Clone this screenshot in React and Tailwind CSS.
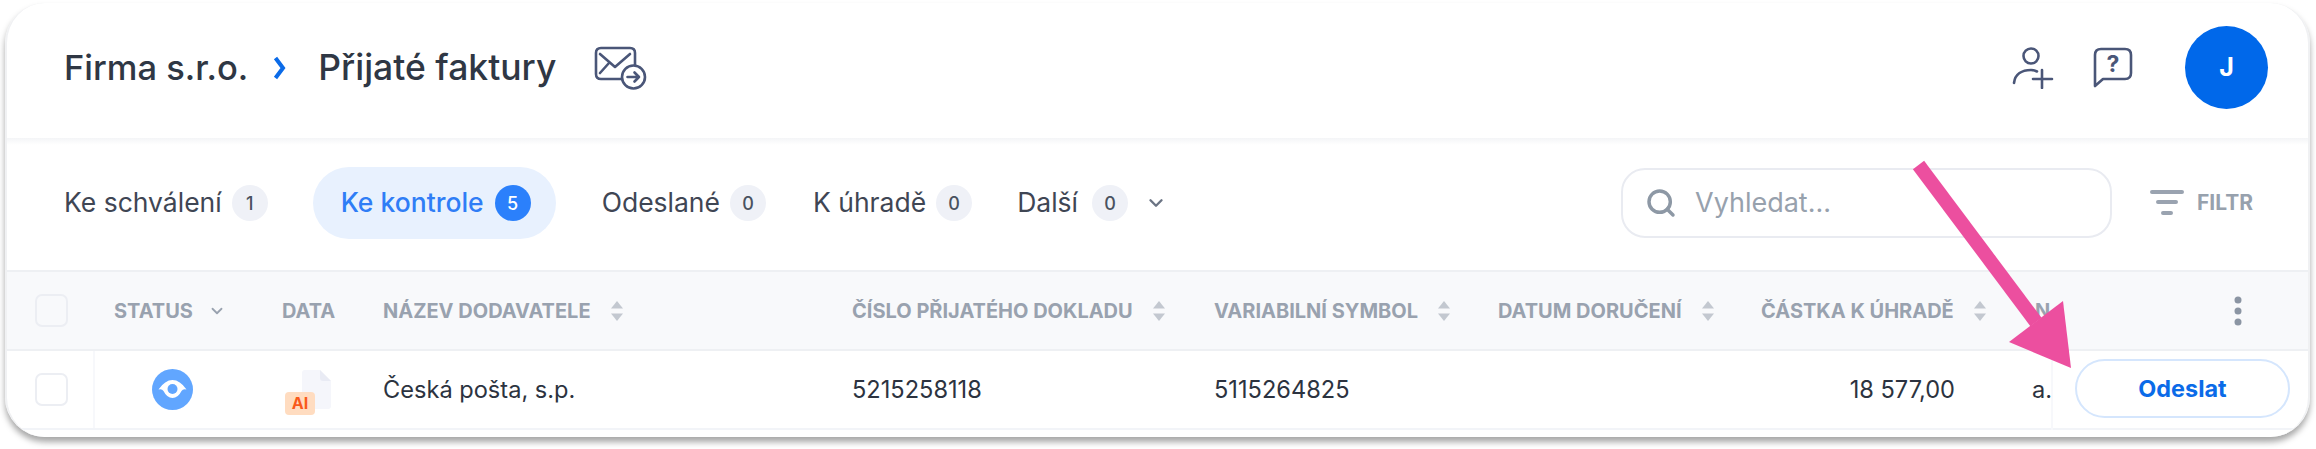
import React from "react";
import { Search, ChevronDown } from "lucide-react";

const Sort = () => (
  <svg width="14" height="26" viewBox="0 0 14 26" className="shrink-0 ml-[19px]">
    <path d="M7 3 L13 10.5 H1 Z" fill="#c3c8d0" />
    <path d="M7 23 L13 15.5 H1 Z" fill="#c3c8d0" />
  </svg>
);

const Badge = ({ n, active }) => (
  <span className={"w-9 h-9 rounded-full flex items-center justify-center text-[18px] font-medium " + (active ? "bg-[#2b80fb] text-white font-bold" : "bg-[#eff1f7] text-[#4a5260]")}>
    {n}
  </span>
);

const Tab = ({ label, n, wide }) => (
  <div className={"flex items-center text-[26.5px] text-[#3f4654] " + (wide ? "gap-[14px]" : "gap-[10px]")}>
    <span>{label}</span>
    <Badge n={n} />
  </div>
);

const Check = () => <div className="w-[33px] h-[33px] rounded-[7px] border-2 border-[#eceef3] bg-transparent" />;

const cols = "grid grid-cols-[88px_168px_101px_469px_362px_284px_263px_274px_35px_258px]";

const Th = ({ children, sort = true }) => (
  <div className="pl-[19px] flex items-center whitespace-nowrap">
    <span>{children}</span>
    {sort && <Sort />}
  </div>
);

export default function App() {
  return (
    <div className="relative w-[2316px] h-[449px] bg-white overflow-hidden font-['Inter',sans-serif]">
      <div className="absolute left-[5px] top-[3px] w-[2305px] h-[434px] rounded-[40px] shadow-[0_5px_6px_rgba(0,0,0,0.35)]" />
      <div className="absolute left-[5px] top-[3px] w-[2305px] h-[434px] bg-white rounded-[40px] overflow-hidden border-x-2 border-[#f0f1f3] flex flex-col">
        {/* title bar */}
        <div className="h-[135px] shrink-0 flex items-center pl-[57px] pr-[40px] pb-[6px]">
          <span className="text-[34.5px] font-medium text-[#2f3744]">Firma s.r.o.</span>
          <svg width="13" height="24" viewBox="0 0 13 24" className="ml-[25px]" fill="none" stroke="#0b6be8" strokeWidth="4">
            <path d="M2.5 2 L10 12 L2.5 22" />
          </svg>
          <span className="text-[35.5px] font-medium text-[#2f3744] ml-[32px]">Přijaté faktury</span>
          <svg width="54" height="46" viewBox="0 0 54 46" className="ml-[38px] mt-[1px]" fill="none" stroke="#4a5678" strokeWidth="2.6" strokeLinecap="round" strokeLinejoin="round">
            <path d="M27 34 H7 Q2 34 2 29 V8 Q2 3 7 3 H36 Q41 3 41 8 V20" />
            <path d="M6 9 L21 22 L36 9" />
            <path d="M6 28 L15 18" />
            <circle cx="39.5" cy="32" r="11.5" fill="#fff" />
            <path d="M33.5 32 H45 M40.5 27.5 L45 32 L40.5 36.5" />
          </svg>
          <div className="ml-auto flex items-center">
            <svg width="42" height="42" viewBox="0 0 42 42" fill="none" stroke="#4a5678" strokeWidth="2.6" strokeLinecap="round">
              <circle cx="19" cy="9" r="7.5" />
              <path d="M2 36 C3 27 10 23 19 23 C21 23 23 23.5 25 24.5" />
              <path d="M30 23 V41 M21 32 H40" />
            </svg>
            <svg width="40" height="42" viewBox="0 0 40 42" fill="none" stroke="#4a5678" strokeWidth="2.6" strokeLinecap="round" strokeLinejoin="round" className="ml-[39px]">
              <path d="M2 39 V8 Q2 2 8 2 H32 Q38 2 38 8 V26 Q38 32 32 32 H10 Z" />
              <text x="20" y="25" textAnchor="middle" fontSize="23" fontWeight="700" fill="#4a5678" stroke="none" fontFamily="Inter">?</text>
            </svg>
            <div className="ml-[52px] w-[83px] h-[83px] rounded-full bg-[#0068ea] text-white text-[25px] font-bold flex items-center justify-center">J</div>
          </div>
        </div>
        <div className="h-[7px] shrink-0 bg-gradient-to-b from-[#f4f5f7] to-white" />

        {/* tabs */}
        <div className="h-[127px] shrink-0 flex items-center pl-[57px] pr-[55px] pb-[9px] border-b-2 border-[#eef0f3]">
          <Tab label="Ke schválení" n="1" />
          <div className="ml-[45px] h-[72px] rounded-[36px] bg-[#e8f1fe] flex items-center gap-[11px] pl-[28px] pr-[25px] text-[26.5px] font-medium text-[#2f7df6]">
            <span>Ke kontrole</span>
            <Badge n="5" active />
          </div>
          <div className="ml-[46px]"><Tab label="Odeslané" n="0" /></div>
          <div className="ml-[47px]"><Tab label="K úhradě" n="0" /></div>
          <div className="ml-[45px]"><Tab label="Další" n="0" wide /></div>
          <ChevronDown size={22} strokeWidth={2.6} className="text-[#6b7484] ml-[17px]" />
          <div className="ml-auto w-[491px] h-[70px] rounded-[24px] border-2 border-[#e9ebf1] flex items-center pl-[22px] text-[27px] text-[#97a1ad]">
            <Search size={32} strokeWidth={2.6} className="text-[#8d98a5]" />
            <span className="ml-[18px]">Vyhledat...</span>
          </div>
          <svg width="34" height="28" viewBox="0 0 34 28" className="ml-[38px]" fill="none" stroke="#9aa3b0" strokeWidth="4" strokeLinecap="round">
            <path d="M2 3 H32 M8 13 H26 M13 24 H21" />
          </svg>
          <span className="ml-[13px] text-[21px] font-bold text-[#97a1ad]">FILTR</span>
        </div>

        {/* table head */}
        <div className={cols + " h-[79px] shrink-0 bg-[#f8f9fb] border-b-2 border-[#eef0f3] text-[20px] font-bold text-[#99a2af]"}>
          <div className="pl-[28px] flex items-center"><Check /></div>
          <div className="pl-[19px] flex items-center">
            <span>STATUS</span>
            <ChevronDown size={18} strokeWidth={2.4} className="ml-[15px] text-[#99a2af]" />
          </div>
          <Th sort={false}>DATA</Th>
          <Th>NÁZEV DODAVATELE</Th>
          <Th>ČÍSLO PŘIJATÉHO DOKLADU</Th>
          <Th>VARIABILNÍ SYMBOL</Th>
          <Th>DATUM DORUČENÍ</Th>
          <Th>ČÁSTKA K ÚHRADĚ</Th>
          <Th sort={false}>N</Th>
          <div className="flex items-center justify-end pr-[67px]">
            <svg width="8" height="30" viewBox="0 0 8 30" fill="#8b95a3">
              <circle cx="4" cy="4" r="3.5" />
              <circle cx="4" cy="15" r="3.5" />
              <circle cx="4" cy="26" r="3.5" />
            </svg>
          </div>
        </div>

        {/* row */}
        <div className={cols + " h-[79px] shrink-0 border-b-2 border-[#f2f4f8] text-[23.6px] text-[#2c3340]"}>
          <div className="pl-[28px] flex items-center border-r-2 border-[#f7f8fb]"><Check /></div>
          <div className="flex items-center pl-[57px]">
            <svg width="41" height="41" viewBox="0 0 41 41">
              <circle cx="20.5" cy="20.5" r="20.5" fill="#61a6ff" />
              <path d="M6.5 20.5 Q13 11 20.5 11 Q28 11 34.5 20.5 Q31 19.5 29.5 22 Q26 29 20.5 29 Q15 29 11.5 22 Q10 19.5 6.5 20.5 Z" fill="#fff" />
              <circle cx="20.5" cy="20" r="5" fill="#61a6ff" />
            </svg>
          </div>
          <div className="relative flex items-center">
            <svg width="30" height="39" viewBox="0 0 30 39" className="ml-[38px] mb-[1px]">
              <path d="M4 0 H19 L30 11 V36 Q30 39 27 39 H4 Q1 39 1 36 V3 Q1 0 4 0 Z" fill="#f5f6fb" />
              <path d="M19 0 L30 11 H22 Q19 11 19 8 Z" fill="#e9ebf4" />
            </svg>
            <span className="absolute left-[22px] top-[41px] w-[30px] h-[23px] rounded-[4px] bg-[#ffdcc0] text-[#f9591a] text-[16px] leading-[23px] font-bold text-center">AI</span>
          </div>
          <div className="pl-[19px] flex items-center">Česká pošta, s.p.</div>
          <div className="pl-[19px] flex items-center">5215258118</div>
          <div className="pl-[19px] flex items-center">5115264825</div>
          <div />
          <div className="flex items-center justify-end pr-[61px]">18 577,00</div>
          <div className="pl-[16px] flex items-center">a.</div>
          <div className="flex items-center pl-[22px] pb-[4px] border-l-2 border-[#f7f8fb] -mb-[2px]">
            <button className="w-[215px] h-[59px] rounded-full border-2 border-[#d5e6fd] bg-white text-[#0b6be8] text-[23.4px] font-bold">Odeslat</button>
          </div>
        </div>
      </div>

      {/* annotation arrow */}
      <svg className="absolute inset-0 pointer-events-none" width="2316" height="449" viewBox="0 0 2316 449">
        <path d="M1918.5 165 L2036 322" stroke="#ec4f9f" strokeWidth="14" fill="none" />
        <path d="M2071 368 L2009 342 L2063 301 Z" fill="#ec4f9f" />
      </svg>
    </div>
  );
}
